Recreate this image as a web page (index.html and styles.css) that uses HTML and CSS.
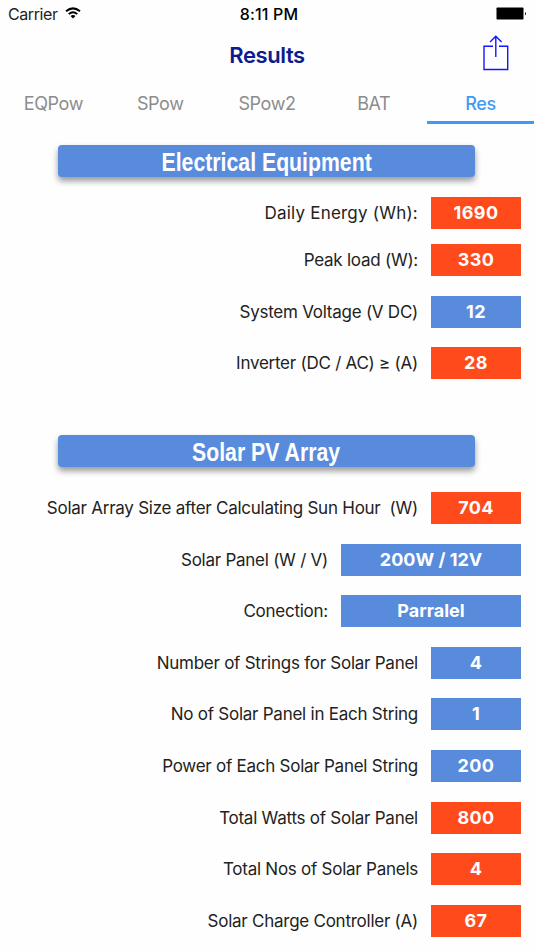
FILE: index.html
```html
<!DOCTYPE html>
<html lang="en">
<head>
    <meta charset="UTF-8">
    <meta name="viewport" content="width=device-width, initial-scale=1.0">
    <title>Results</title>
    <link rel="stylesheet" href="styles.css">
</head>

<body>

    <!-- Status Bar -->
    <div class="status-bar">
        <div class="carrier">
            <span>Carrier</span>
            <svg class="wifi" width="16" height="12" viewBox="0 0 16 12" fill="none" stroke="#000">
                <path d="M1 4.3 Q8 -1.6 15 4.3" stroke-width="2"/>
                <path d="M3.7 7.1 Q8 3.4 12.3 7.1" stroke-width="1.9"/>
                <path d="M8 11.6 L5.5 9.1 Q8 7.1 10.5 9.1 Z" fill="#000" stroke="none"/>
            </svg>
        </div>
        <span class="time">8:11 PM</span>
        <svg class="battery" width="31" height="13" viewBox="0 0 31 13">
            <rect x="0.5" y="0.5" width="27" height="12" rx="0.8"/>
            <path d="M29 5 Q31 6.5 29 8.5 Z"/>
        </svg>
    </div>

    <!-- Title and Share -->
    <header class="nav-bar">
        <h1>Results</h1>
        <svg class="share" width="26" height="36" viewBox="0 0 26 36" fill="none" stroke="#1414ff" stroke-width="1.4">
            <path d="M10 11.2 H1 V34.5 H24.7 V11.2 H16"/>
            <path d="M12.8 22 V1.5 M7 7 L12.8 1.2 L18.6 7"/>
        </svg>
    </header>

    <nav class="tabs">
        <span class="tab">EQPow</span>
        <span class="tab">SPow</span>
        <span class="tab">SPow2</span>
        <span class="tab">BAT</span>
        <span class="tab active">Res</span>
    </nav>

    <section class="equipment">
        <h2><span>Electrical Equipment</span></h2>
        <div class="row first"><span class="label">Daily Energy (Wh):</span><span class="value red">1690</span></div>
        <div class="row"><span class="label">Peak load (W):</span><span class="value red">330</span></div>
        <div class="row"><span class="label">System Voltage (V DC)</span><span class="value">12</span></div>
        <div class="row"><span class="label">Inverter (DC / AC) ≥ (A)</span><span class="value red">28</span></div>
    </section>

    <section class="array">
        <h2><span>Solar PV Array</span></h2>
        <div class="row"><span class="label">Solar Array Size after Calculating Sun Hour&nbsp; (W)</span><span class="value red">704</span></div>
        <div class="row"><span class="label">Solar Panel (W / V)</span><span class="value wide">200W / 12V</span></div>
        <div class="row"><span class="label">Conection:</span><span class="value wide">Parralel</span></div>
        <div class="row"><span class="label">Number of Strings for Solar Panel</span><span class="value">4</span></div>
        <div class="row"><span class="label">No of Solar Panel in Each String</span><span class="value">1</span></div>
        <div class="row"><span class="label">Power of Each Solar Panel String</span><span class="value">200</span></div>
        <div class="row"><span class="label">Total Watts of Solar Panel</span><span class="value red">800</span></div>
        <div class="row"><span class="label">Total Nos of Solar Panels</span><span class="value red">4</span></div>
        <div class="row"><span class="label">Solar Charge Controller (A)</span><span class="value red">67</span></div>
    </section>

</body>

</html>
```

FILE: styles.css
```css
/* General Styles */
* {
    box-sizing: border-box;
}

body {
    font-family: Inter, 'Liberation Sans', sans-serif;
    background: #fefefe;
    color: #222;
    margin: 0;
    height: 950px;
    overflow: hidden;
}

/* Status bar */
.status-bar {
    display: grid;
    grid-template-columns: 1fr auto 1fr;
    align-items: center;
    height: 28px;
    padding: 0 7px 0 8px;
    font-size: 16px;
}

.carrier {
    display: flex;
    align-items: center;
    gap: 7px;
    letter-spacing: -0.4px;
}

.wifi {
    margin-top: -3px;
}

.time {
    margin-left: 3px;
    color: #000;
    font-weight: 500;
    letter-spacing: 0.2px;
}

.battery {
    justify-self: end;
    margin-top: -2px;
}

/* Title */
.nav-bar {
    display: grid;
    grid-template-columns: 1fr auto 1fr;
    align-items: center;
    height: 54px;
    padding-right: 25px;
}

h1 {
    grid-column: 2;
    margin: 0 0 0 25px;
    font-size: 22px;
    font-weight: 600;
    letter-spacing: -0.4px;
    color: #0c1c8c;
}

.share {
    justify-self: end;
    margin-top: -4px;
}

/* Tabs */
.tabs {
    display: grid;
    grid-template-columns: repeat(5, 1fr);
    height: 42px;
}

.tab {
    display: flex;
    justify-content: center;
    padding-top: 11px;
    border-bottom: 3px solid transparent;
    font-size: 18px;
    line-height: 22px;
    letter-spacing: -0.4px;
    color: #8c8c8c;
}

.tab.active {
    color: #3d9bf5;
    border-bottom-color: #3d9bf5;
    font-weight: 500;
}

/* Sections */
.equipment {
    height: 290px;
    padding-top: 21px;
}

.array {
    padding-top: 21px;
}

h2 {
    width: 417px;
    height: 32px;
    margin: 0 0 25px 58px;
    border-radius: 4px;
    background: #588bdc;
    box-shadow: 0 4px 6px rgba(0, 0, 0, 0.4);
    color: #fff;
    font-family: 'Liberation Sans', sans-serif;
    font-size: 25px;
    line-height: 34px;
    text-align: center;
}

/* condensed headings */
h2 span {
    display: inline-block;
    transform: scaleX(0.85);
}

.equipment h2 {
    margin-bottom: 19.5px;
}

.row {
    display: flex;
    justify-content: flex-end;
    align-items: center;
    gap: 13px;
    height: 32px;
    margin-bottom: 19.6px;
    padding-right: 13px;
}

.row.first {
    margin-bottom: 15.5px;
}

.label {
    font-size: 17px;
    letter-spacing: -0.25px;
    white-space: nowrap;
}

.first .label {
    letter-spacing: 0.22px;
}

.value {
    width: 90px;
    height: 32px;
    background: #588bdc;
    color: #fff;
    font-size: 18px;
    font-weight: 700;
    line-height: 32px;
    letter-spacing: 0.4px;
    text-align: center;
}

.value.wide {
    width: 180px;
    letter-spacing: 0;
}

.value.red {
    background: #ff4a1c;
}
```
